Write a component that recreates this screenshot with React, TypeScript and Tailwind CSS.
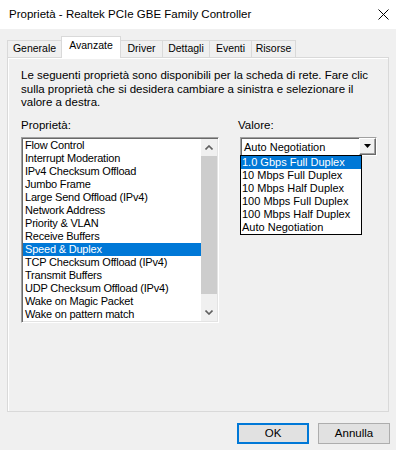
import React from "react";

const properties = [
  "Flow Control",
  "Interrupt Moderation",
  "IPv4 Checksum Offload",
  "Jumbo Frame",
  "Large Send Offload (IPv4)",
  "Network Address",
  "Priority & VLAN",
  "Receive Buffers",
  "Speed & Duplex",
  "TCP Checksum Offload (IPv4)",
  "Transmit Buffers",
  "UDP Checksum Offload (IPv4)",
  "Wake on Magic Packet",
  "Wake on pattern match",
];

const values = [
  "1.0 Gbps Full Duplex",
  "10 Mbps Full Duplex",
  "10 Mbps Half Duplex",
  "100 Mbps Full Duplex",
  "100 Mbps Half Duplex",
  "Auto Negotiation",
];

const tabs = [
  { label: "Generale", cls: "w-[54px] h-[17px] border-l" },
  { label: "Avanzate", cls: "w-[60px] h-[22px] border-l border-r bg-white -mb-px pb-[3px]", active: true },
  { label: "Driver", cls: "w-[41px] h-[17px]" },
  { label: "Dettagli", cls: "w-[47px] h-[17px] border-l" },
  { label: "Eventi", cls: "w-[42px] h-[17px] border-l" },
  { label: "Risorse", cls: "w-[45px] h-[17px] border-l border-r" },
];

export default function App() {
  return (
    <div className="w-[396px] h-[450px] bg-[#f0f0f0] flex flex-col text-black font-['Liberation_Sans',Arial,sans-serif]">
      {/* Title bar */}
      <div className="h-[29px] bg-white flex items-center justify-between pl-[9px] pr-[7px]">
        <span className="text-[11.5px]">Proprietà - Realtek PCIe GBE Family Controller</span>
        <svg width="11" height="11" viewBox="0 0 11 11">
          <path d="M0.5 0.5 L10.5 10.5 M10.5 0.5 L0.5 10.5" stroke="#000" strokeWidth="1" />
        </svg>
      </div>

      {/* Tabs */}
      <div className="mt-[7px] h-[21px] flex items-end pl-[7px] relative z-10">
        {tabs.map((t) => (
          <div
            key={t.label}
            className={`${t.cls} border-t border-[#d9d9d9] flex items-center justify-center text-[10.5px] ${t.active ? "" : "bg-[#f0f0f0] pb-px"}`}
          >
            {t.label}
          </div>
        ))}
      </div>

      {/* Panel */}
      <div className="mx-[7px] h-[355px] border border-[#d9d9d9] bg-[#f0f0f0] shadow-[inset_1px_1px_0_#ffffff] pt-[11px] px-[13px]">
        <p className="text-[11.5px] leading-[13.5px]">
          Le seguenti proprietà sono disponibili per la scheda di rete. Fare clic
          <br />
          sulla proprietà che si desidera cambiare a sinistra e selezionare il
          <br />
          valore a destra.
        </p>

        <div className="mt-[8px] flex">
          {/* Left: property list */}
          <div className="w-[198px]">
            <div className="text-[11.5px] leading-[14px] h-[14px]">Proprietà:</div>
            <div className="mt-[5px] flex h-[186px] bg-white border border-t-[#a0a0a0] border-l-[#a0a0a0] border-b-white border-r-white shadow-[inset_1px_1px_0_#696969,inset_-1px_-1px_0_#e3e3e3] p-px">
              <ul className="w-[178px] text-[11px] tracking-[-0.2px]">
                {properties.map((p) => (
                  <li
                    key={p}
                    className={`h-[13px] leading-[13px] pl-[2px] whitespace-nowrap ${p === "Speed & Duplex" ? "bg-[#0078d7] text-white" : ""}`}
                  >
                    {p}
                  </li>
                ))}
              </ul>
              {/* Scrollbar */}
              <div className="w-[16px] bg-[#f0f0f0] flex flex-col">
                <div className="h-[17px] flex items-center justify-center">
                  <svg width="8" height="5" viewBox="0 0 8 5">
                    <path d="M0.5 4.5 L4 1 L7.5 4.5" stroke="#606060" strokeWidth="1.6" fill="none" />
                  </svg>
                </div>
                <div className="h-[138px] bg-[#cdcdcd]" />
                <div className="flex-1" />
                <div className="h-[17px] flex items-center justify-center">
                  <svg width="8" height="5" viewBox="0 0 8 5">
                    <path d="M0.5 0.5 L4 4 L7.5 0.5" stroke="#606060" strokeWidth="1.6" fill="none" />
                  </svg>
                </div>
              </div>
            </div>
          </div>

          {/* Right: value */}
          <div className="ml-[19px] w-[139px]">
            <div className="text-[11.5px] leading-[14px] h-[14px]">Valore:</div>
            <div className="mt-[5px] ml-[2px] w-[137px] h-[19px] relative flex bg-white border border-t-[#a0a0a0] border-l-[#a0a0a0] border-b-white border-r-white shadow-[inset_1px_1px_0_#696969]">
              <div className="flex-1 pl-[3px] pt-px text-[11px] leading-[16px] whitespace-nowrap">Auto Negotiation</div>
              <div className="w-[17px] h-full bg-[#f0f0f0] border border-t-white border-l-white border-b-[#696969] border-r-[#696969] shadow-[inset_-1px_-1px_0_#a0a0a0] flex items-center justify-center">
                <svg width="7" height="4" viewBox="0 0 7 4">
                  <path d="M0 0 H7 L3.5 4 Z" fill="#000" />
                </svg>
              </div>
              {/* Open dropdown list */}
              <ul className="absolute top-full -left-px w-[122px] bg-white border border-black text-[11px] z-20">
                {values.map((v, i) => (
                  <li
                    key={v}
                    className={`h-[13px] leading-[13px] pl-px whitespace-nowrap ${i === 0 ? "bg-[#0078d7] text-white" : ""}`}
                  >
                    {v}
                  </li>
                ))}
              </ul>
            </div>
          </div>
        </div>
      </div>

      {/* Buttons */}
      <div className="mt-[11px] flex justify-end gap-[9px] pr-[6px]">
        <button className="w-[72px] h-[21px] bg-[#e1e1e1] border-2 border-[#0078d7] text-[11.5px]">OK</button>
        <button className="w-[72px] h-[21px] bg-[#e1e1e1] border border-[#adadad] text-[11.5px]">Annulla</button>
      </div>
    </div>
  );
}
